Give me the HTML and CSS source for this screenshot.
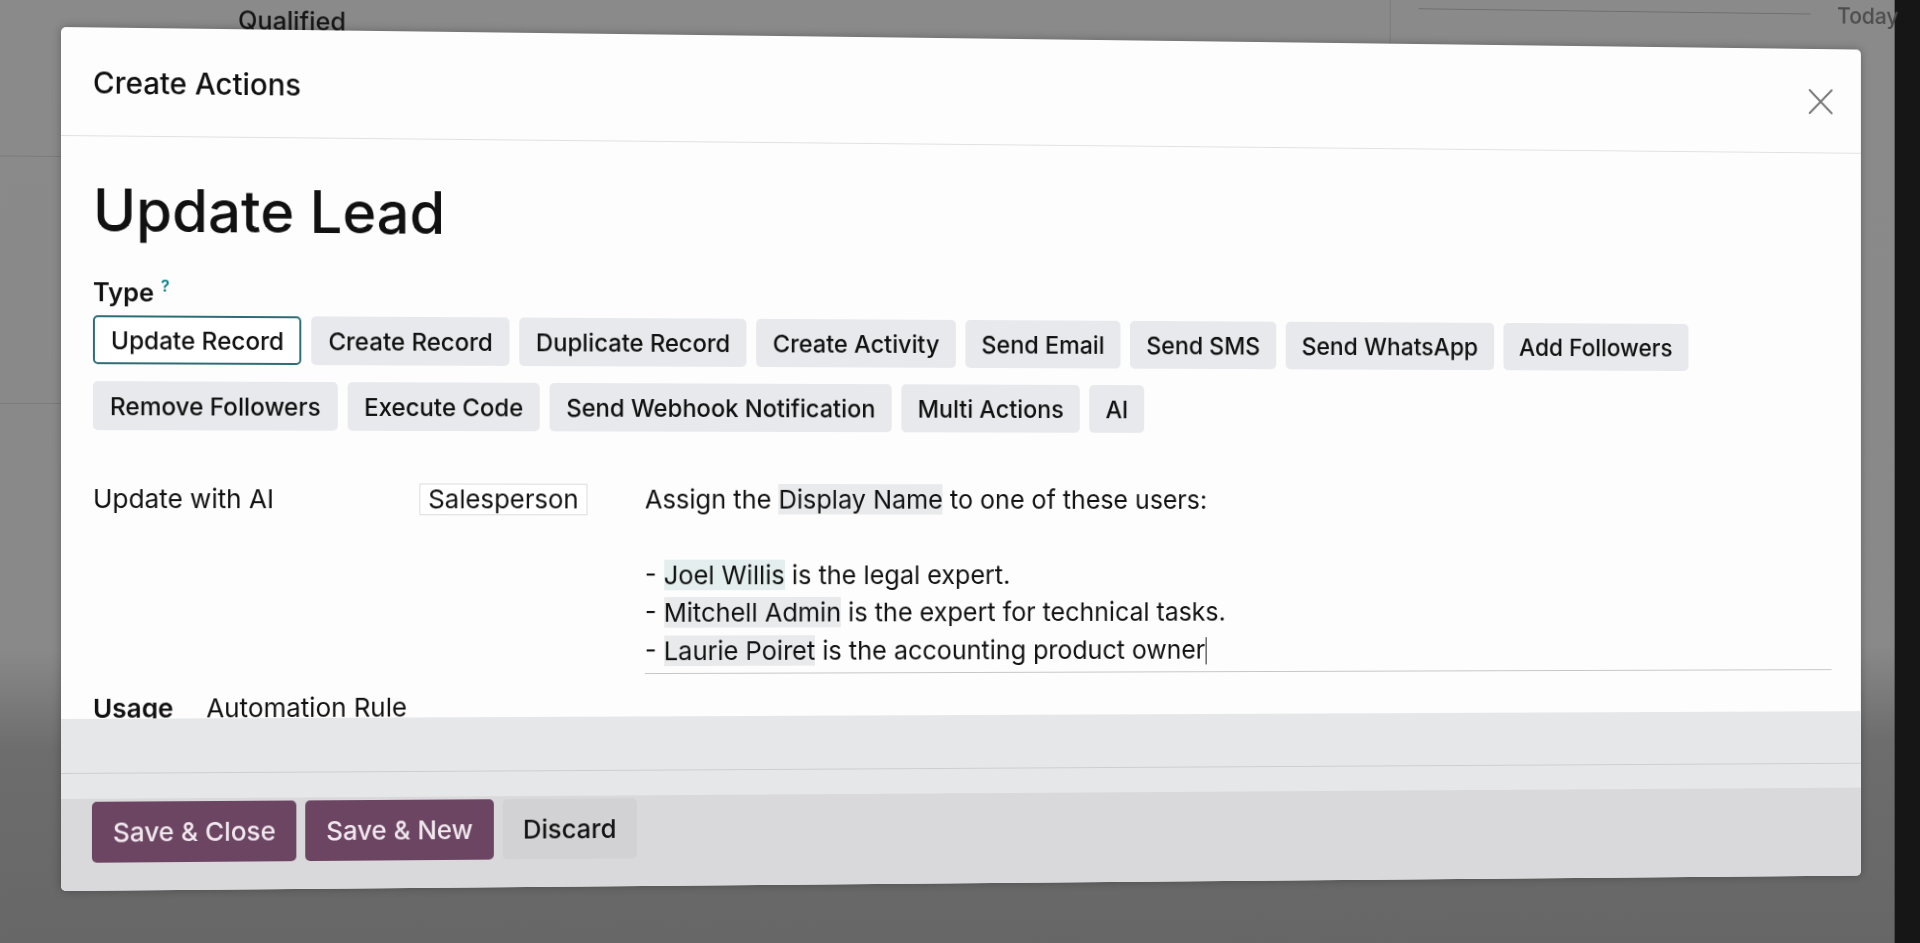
FILE: index.html
```html
<!DOCTYPE html>
<html lang="en">
<head>
<meta charset="utf-8">
<title>Create Actions</title>
<link rel="stylesheet" href="styles.css">
</head>
<body>
<div class="screen">
  <div class="page">
    <div class="page-top">
      <span class="qualified">Qualified</span>
      <span class="vline"></span>
      <span class="hline"></span>
      <span class="today">Today</span>
    </div>
    <div class="left-rule rule-a"></div>
    <div class="left-rule rule-b"></div>
  </div>

  <div class="modal">
    <header class="modal-header">
      <h4 class="modal-title">Create Actions</h4>
      <button class="close" aria-label="Close">
        <svg width="28" height="28" viewBox="0 0 28 28"><path d="M2 2 L26 26 M26 2 L2 26" stroke="#777" stroke-width="2.2" fill="none" stroke-linecap="round"/></svg>
      </button>
    </header>

    <div class="modal-body">
      <h1 class="record-title">Update Lead</h1>
      <div class="type-label">Type<sup class="help">?</sup></div>
      <div class="type-options">
        <span class="opt active">Update Record</span>
        <span class="opt">Create Record</span>
        <span class="opt">Duplicate Record</span>
        <span class="opt">Create Activity</span>
        <span class="opt">Send Email</span>
        <span class="opt">Send SMS</span>
        <span class="opt">Send WhatsApp</span>
        <span class="opt">Add Followers</span>
        <span class="opt">Remove Followers</span>
        <span class="opt">Execute Code</span>
        <span class="opt">Send Webhook Notification</span>
        <span class="opt">Multi Actions</span>
        <span class="opt">AI</span>
      </div>

      <div class="ai-row">
        <div class="ai-label">Update with AI</div>
        <div class="chip-cell"><span class="field-chip">Salesperson</span></div>
        <div class="prompt">
          <div class="prompt-line">Assign the <span class="tag">Display Name</span> to one of these users:</div>
          <div class="prompt-line">&nbsp;</div>
          <div class="prompt-line">- <span class="tag user">Joel Willis</span> is the legal expert.</div>
          <div class="prompt-line">- <span class="tag">Mitchell Admin</span> is the expert for technical tasks.</div>
          <div class="prompt-line">- <span class="tag">Laurie Poiret</span> is the accounting product owner<span class="caret"></span></div>
        </div>
      </div>

      <div class="usage-row">
        <span class="usage-label">Usage</span>
        <span>Automation Rule</span>
      </div>
    </div>

    <div class="modal-band"></div>
    <div class="modal-gap"></div>

    <footer class="modal-footer">
      <button class="btn primary">Save &amp; Close</button>
      <button class="btn primary">Save &amp; New</button>
      <button class="btn secondary">Discard</button>
    </footer>
  </div>
</div>
</body>
</html>
```

FILE: styles.css
```css
html, body {
  margin: 0;
  padding: 0;
  width: 1920px;
  height: 943px;
  overflow: hidden;
  background: #161616;
}

body {
  font-family: Inter, "Noto Sans", "Liberation Sans", sans-serif;
  color: #111;
}

.screen {
  position: relative;
  width: 1983px;
  height: 1003px;
  margin-top: -30px;
  background: linear-gradient(to bottom, #8a8a8a 0, #898989 680px, #6d6d6d 780px, #666 1003px);
  transform-origin: 61px 570px;
  transform: perspective(2000px) rotateY(2.8deg);
}

/* page behind the dialog */
.page {
  height: 100%;
}

.page-top {
  display: grid;
  grid-template-columns: 239px 1197px 1px 30px 424px 29px auto;
  height: 57px;
}

.qualified {
  grid-column: 2;
  align-self: start;
  margin-top: 33px;
  font-size: 25.5px;
  line-height: 30px;
  font-weight: 500;
  color: #161616;
}

.vline {
  grid-column: 3;
  background: #7a7a7a;
}

.hline {
  grid-column: 5;
  align-self: start;
  margin-top: 20px;
  height: 1px;
  background: #6e6e6e;
}

.today {
  grid-column: 7;
  align-self: start;
  margin-top: 8px;
  font-size: 23px;
  line-height: 28px;
  font-weight: 500;
  color: #4c4c4c;
  white-space: nowrap;
}

.left-rule {
  width: 61px;
  height: 1px;
  background: #7b7b7b;
}
.rule-a { margin-top: 129px; }
.rule-b { margin-top: 246px; }

/* dialog */
.modal {
  position: absolute;
  top: 57px;
  left: 61px;
  width: 1885px;
  height: 864px;
  background: #fdfdfd;
  border-radius: 5px;
  overflow: hidden;
  display: flex;
  flex-direction: column;
  box-shadow: 0 0 10px rgba(0, 0, 0, 0.28);
}

.modal-header {
  flex: none;
  height: 109px;
  box-sizing: border-box;
  border-bottom: 1px solid #e0e1e3;
  display: flex;
  align-items: center;
  padding: 2px 30px 0 32px;
}

.modal-title {
  flex: 1;
  margin: 0;
  font-size: 29.7px;
  line-height: 36px;
  font-weight: 500;
}

.close {
  width: 28px;
  height: 28px;
  padding: 0;
  border: 0;
  background: none;
  display: flex;
}

.modal-body {
  flex: none;
  height: 583px;
  box-sizing: border-box;
  padding: 38px 32px 0;
  overflow: hidden;
}

.record-title {
  margin: 0;
  font-size: 58.6px;
  line-height: 72px;
  font-weight: 500;
}

.type-label {
  margin-top: 31px;
  font-size: 25.5px;
  line-height: 30px;
  font-weight: 600;
}

.help {
  color: #017e84;
  font-size: 16px;
  font-weight: 600;
  vertical-align: top;
  line-height: 16px;
  margin-left: 7px;
}

.type-options {
  margin-top: 8px;
  display: flex;
  flex-wrap: wrap;
  gap: 17px 10px;
  width: 1720px;
}

.opt {
  height: 49px;
  box-sizing: border-box;
  padding: 0 16px;
  border: 1px solid transparent;
  border-radius: 5px;
  background: #e7e9ec;
  display: flex;
  align-items: center;
  font-size: 24.5px;
  font-weight: 500;
  white-space: nowrap;
}

.opt.active {
  background: #fff;
  border: 2px solid #2d6e75;
  padding: 0 16px;
}

.ai-row {
  margin-top: 49.5px;
  display: flex;
  align-items: flex-start;
  font-size: 26.3px;
  line-height: 38.5px;
}

.ai-label {
  width: 330px;
  flex: none;
}

.chip-cell {
  width: 231px;
  flex: none;
}

.field-chip {
  display: inline-block;
  margin-top: 2.5px;
  height: 32px;
  box-sizing: border-box;
  border: 1px solid #dcdcdc;
  background: #fff;
  padding: 0 8px;
  line-height: 30px;
}

.prompt {
  flex: 1;
  padding-bottom: 3px;
  border-bottom: 1px solid #c6c6c6;
}

.tag {
  background: #e9eaeb;
}
.tag.user {
  background: #e4eeee;
}

.caret {
  display: inline-block;
  width: 1.5px;
  height: 28px;
  background: #111;
  vertical-align: -6px;
}

.usage-row {
  margin-top: 14px;
  display: flex;
  gap: 33px;
  font-size: 26.3px;
  line-height: 38.5px;
}

.usage-label {
  font-weight: 600;
}

.modal-band {
  flex: none;
  height: 54px;
  background: #e6e7e9;
  border-bottom: 1px solid #cdced0;
}

.modal-gap {
  flex: none;
  height: 25px;
  background: #e6e7e9;
}

.modal-footer {
  flex: 1;
  background: #d9d9db;
  padding: 2.5px 31px 0;
  display: flex;
  align-items: flex-start;
  gap: 9px;
}

.btn {
  height: 61px;
  padding: 0 21px;
  border: 0;
  border-radius: 5px;
  font-family: inherit;
  font-size: 26.3px;
  font-weight: 500;
}

.btn.primary {
  background: #6b4562;
  color: #f0e8ee;
}

.btn.secondary {
  background: #d2d2d4;
  color: #141414;
}
```
